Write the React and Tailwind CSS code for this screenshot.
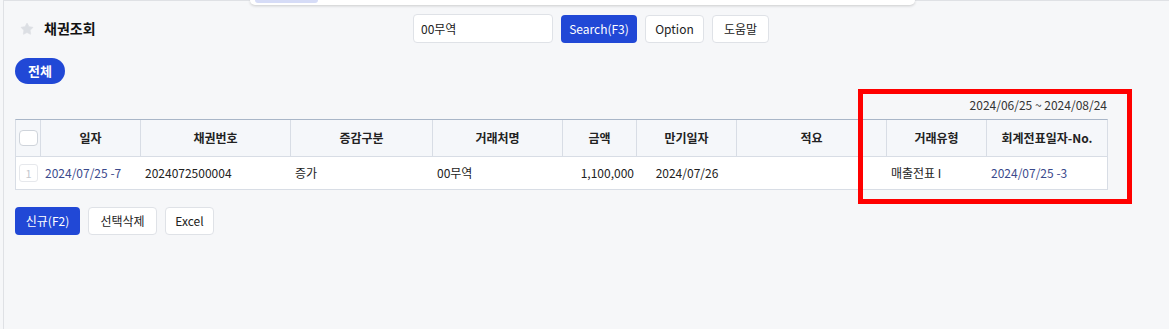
import { Star } from 'lucide-react'

const font = { fontFamily: '"Noto Sans CJK KR", "Noto Sans", sans-serif' }

const columns = [
  { key: 'date', label: '일자', w: 'w-[100px]' },
  { key: 'no', label: '채권번호', w: 'w-[150px]' },
  { key: 'kind', label: '증감구분', w: 'w-[142px]' },
  { key: 'client', label: '거래처명', w: 'w-[130px]' },
  { key: 'amount', label: '금액', w: 'w-[74px]' },
  { key: 'due', label: '만기일자', w: 'w-[100px]' },
  { key: 'memo', label: '적요', w: 'w-[150px]' },
  { key: 'type', label: '거래유형', w: 'w-[100px]' },
  { key: 'slip', label: '회계전표일자-No.', w: 'w-[120px]' },
]

function Button({ children, primary, className = '' }) {
  return (
    <button
      className={
        'flex items-center justify-center rounded-[4px] text-[12px] ' +
        (primary
          ? 'bg-[#2148d6] text-white'
          : 'border border-[#dfe2e7] bg-white text-[#222]') +
        ' ' +
        className
      }
    >
      {children}
    </button>
  )
}

export default function App() {
  return (
    <div className="relative h-[329px] w-[1169px] overflow-hidden bg-[#f6f7f9]" style={font}>
      <div className="ml-[3px] h-full border-l border-t border-[#dfe1e5]">
        <div className="pl-[11px] pt-[13px]">
          {/* header */}
          <div className="flex h-[29px] items-center">
            <div className="flex w-[398px] items-center gap-[10px] pl-[5px]">
              <Star className="h-[14px] w-[14px] fill-[#dcdfe4] text-[#dcdfe4]" strokeWidth={1} />
              <span className="text-[14px] font-bold text-[#111]">채권조회</span>
            </div>
            <div className="flex h-[29px] w-[140px] items-center rounded-[4px] border border-[#dfe2e7] bg-white px-[7px] text-[12px] text-[#222]">
              00무역
            </div>
            <Button primary className="ml-[8px] h-[28px] w-[76px]">Search(F3)</Button>
            <Button className="ml-[8px] h-[28px] w-[59px]">Option</Button>
            <Button className="ml-[8px] h-[28px] w-[57px]">도움말</Button>
          </div>

          {/* filter pill */}
          <div className="mt-[15px]">
            <button className="flex h-[26px] w-[50px] items-center justify-center rounded-full bg-[#2148d6] text-[13px] font-bold text-white">
              전체
            </button>
          </div>

          {/* date range */}
          <div className="mt-[13px] flex w-[1092px] justify-end text-[12px] leading-[16px] text-[#333]">
            2024/06/25 ~ 2024/08/24
          </div>

          {/* table */}
          <div className="mt-[6px] w-[1093px] border-x border-b border-t border-[#d8dde5] border-t-[#a9b6c8] bg-white">
            <div className="flex h-[37px] border-b border-[#d8dde5] bg-[#f5f7fa] text-[12px] font-bold text-[#222]">
              <div className="flex w-[25px] items-center justify-center border-r border-[#d8dde5]">
                <div className="h-[16px] w-[19px] rounded-[4px] border border-[#cfd4db] bg-white" />
              </div>
              {columns.map((c, i) => (
                <div
                  key={c.key}
                  className={
                    'flex items-center justify-center ' +
                    c.w +
                    (i < columns.length - 1 ? ' border-r border-[#d8dde5]' : '')
                  }
                >
                  {c.label}
                </div>
              ))}
            </div>
            <div className="flex h-[32px] items-center text-[12px] text-[#222]">
              <div className="flex w-[25px] justify-center">
                <div className="flex h-[18px] w-[19px] items-center justify-center rounded-[3px] border border-[#e6e8ec] text-[11px] text-[#c4c8ce]">
                  1
                </div>
              </div>
              <div className="w-[100px] pl-[4px] text-[#3b4a8c]">2024/07/25 -7</div>
              <div className="w-[150px] pl-[4px]">2024072500004</div>
              <div className="w-[142px] pl-[4px]">증가</div>
              <div className="w-[130px] pl-[4px]">00무역</div>
              <div className="w-[74px] pr-[3px] text-right">1,100,000</div>
              <div className="w-[100px] text-center">2024/07/26</div>
              <div className="w-[150px]" />
              <div className="w-[100px] pl-[4px]">매출전표 I</div>
              <div className="w-[120px] pl-[4px] text-[#3b4a8c]">2024/07/25 -3</div>
            </div>
          </div>

          {/* actions */}
          <div className="mt-[17px] flex gap-[8px]">
            <Button primary className="h-[28px] w-[65px]">신규(F2)</Button>
            <Button className="h-[28px] w-[69px]">선택삭제</Button>
            <Button className="h-[28px] w-[49px]">Excel</Button>
          </div>
        </div>
      </div>

      {/* dropdown edge peeking at top */}
      <div className="absolute left-[250px] top-0 h-[5px] w-[665px] rounded-b-[10px] bg-white shadow-[0_1px_3px_rgba(0,0,0,0.18)]">
        <div className="ml-[5px] h-[3px] w-[63px] rounded-b-[6px] bg-[#d6dcf7]" />
      </div>

      {/* annotation */}
      <div className="pointer-events-none absolute left-[858px] top-[89px] h-[115px] w-[274px] border-[5px] border-[#ff0000]" />
    </div>
  )
}
